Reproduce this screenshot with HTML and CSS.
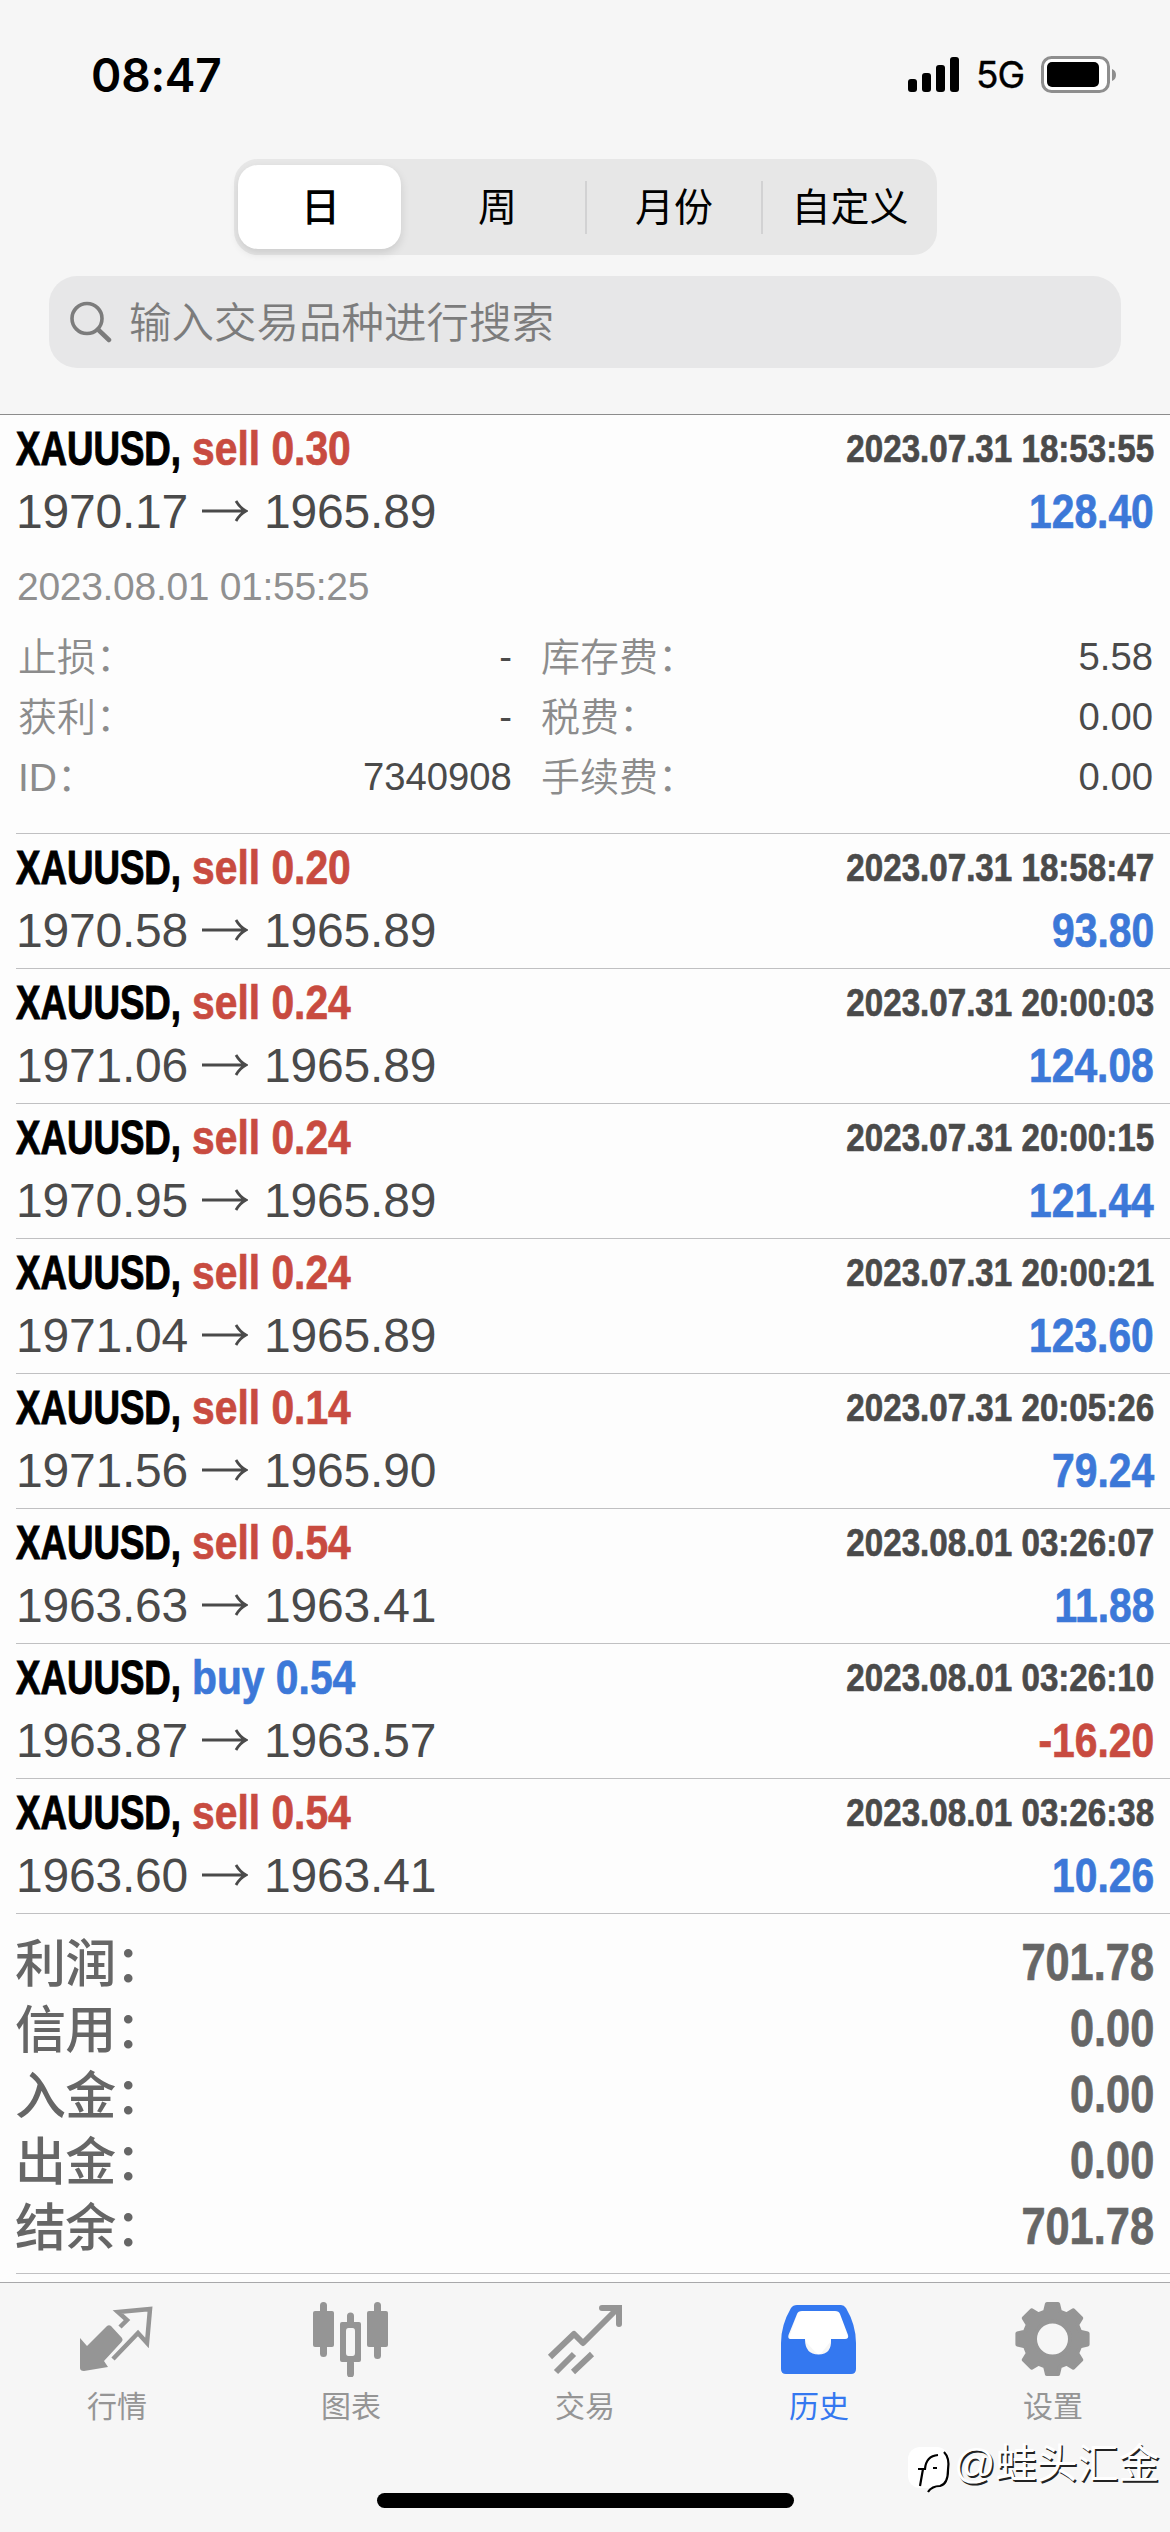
FILE: index.html
```
<!DOCTYPE html>
<html lang="zh-CN">
<head>
<meta charset="utf-8">
<title>历史</title>
<link rel="stylesheet" href="styles.css">
</head>
<body>
<div class="screen">
  <header class="header">
    <div class="status">
      <span class="time">08:47</span>
      <span class="indicators">
        <svg class="signal" width="52" height="36" viewBox="0 0 52 36"><rect x="0" y="22" width="9" height="13" rx="3"/><rect x="14" y="16" width="9" height="19" rx="3"/><rect x="28" y="8" width="9" height="27" rx="3"/><rect x="42" y="0" width="9" height="35" rx="3"/></svg>
        <span class="network">5G</span>
        <svg class="battery" width="76" height="38" viewBox="0 0 76 38"><rect x="1.5" y="1.5" width="66" height="34" rx="9" fill="#fff" stroke="#8e8e8e" stroke-width="3"/><rect x="6" y="6" width="52" height="25" rx="5"/><path d="M71 13q4 1.500 4 6t-4 6z" fill="#8e8e8e"/></svg>
      </span>
    </div>
    <nav class="segments"><span class="segment active">日</span><span class="segment">周</span><span class="segment divided">月份</span><span class="segment divided">自定义</span></nav>
    <div class="search">
      <svg width="42" height="42" viewBox="0 0 42 42" fill="none" stroke="#7c7c7c" stroke-linecap="round"><circle cx="17" cy="17.500" r="15" stroke-width="3.600"/><path d="M28 28.500l11 10.500" stroke-width="4.500"/></svg>
      <span>输入交易品种进行搜索</span>
    </div>
  </header>
  <main class="deals" id="deals"></main>
  <section class="summary">
    <div class="total"><span>利润：</span><b class="cond">701.78</b></div>
    <div class="total"><span>信用：</span><b class="cond">0.00</b></div>
    <div class="total"><span>入金：</span><b class="cond">0.00</b></div>
    <div class="total"><span>出金：</span><b class="cond">0.00</b></div>
    <div class="total"><span>结余：</span><b class="cond">701.78</b></div>
  </section>
  <footer class="tabbar">
    <a class="tab"><svg width="76" height="76" viewBox="0 0 76 76"><path d="M1 37l7 8 20-20q2-1.500 4 0l11 12q1.500 2-.5 4L25 60l4 6-24 4q-4 0-4-3z"/><path d="M41 26l7-7-9-8 32-3-3 34-9-10-25 26" fill="none" stroke="currentColor" stroke-width="4.500"/></svg><span>行情</span></a>
    <a class="tab"><svg width="76" height="76" viewBox="0 0 76 76"><g stroke="currentColor" stroke-width="7" stroke-linecap="round"><path d="M10.500 4.500v48M64.500 4.500v50M37.500 15v7M37.500 62v11"/></g><rect y="10" width="21" height="36" rx="2"/><rect x="54" y="10" width="21" height="36" rx="2"/><path fill-rule="evenodd" d="M29 21h17q2 0 2 2v36q0 2-2 2H29q-2 0-2-2V23q0-2 2-2zm6.500 6q-2.500 0-2.500 3v22q0 3 2.500 3h4q2.500 0 2.500-3V30q0-3-2.500-3z"/></svg><span>图表</span></a>
    <a class="tab"><svg width="76" height="76" viewBox="0 0 76 76" fill="none" stroke="currentColor" stroke-width="6"><path d="M3 56l24-23 9 9L70 8" stroke-linejoin="round"/><path d="M55 7h17v16" stroke-linecap="round"/><path d="M9 71l18-18M26 71l19-18"/></svg><span>交易</span></a>
    <a class="tab current"><svg width="76" height="76" viewBox="0 0 76 76"><path fill="#fff" d="M18 8h40l10 32H50L38 55 24 40H7z"/><path fill-rule="evenodd" d="M16 4h44q3 0 5 3 10 17 10 35v26q0 5-5 5H5q-5 0-5-5V42Q0 24 10 7q2-3 6-3zm5 6q-4 0-5 3L7.500 34q-1 4 2 4H24q0 15.500 13.500 15.500T50 38h14q4 0 3-4l-8-21q-1-3-5-3z"/></svg><span>历史</span></a>
    <a class="tab"><svg width="76" height="76" viewBox="0 0 76 76" id="gear"></svg><span>设置</span></a>
    <div class="watermark"><svg width="44" height="52" viewBox="0 0 44 52"><rect width="41" height="41" rx="12" fill="#fff"/><path d="M12 39l3-17M10 22h7q1-13 13-14M25 21h4" fill="none" stroke="#000" stroke-width="2.200"/><path d="M36 5q6 6 4 18 0 14-8 16-8 0-12 6" fill="none" stroke="#000" stroke-width="2.200"/></svg><span>@蛙头汇金</span></div>
    <div class="home"></div>
  </footer>
</div>
<script src="app.js"></script>
</body>
</html>
```
FILE: styles.css
```
* { box-sizing: border-box; }
body { margin: 0; background: #fdfdfd; font-family: "Liberation Sans", "Noto Sans CJK SC", sans-serif; }
.screen { width: 1170px; height: 2532px; display: flex; flex-direction: column; overflow: hidden; }
.header { height: 415px; flex: none; background: #f6f6f6; border-bottom: 1px solid #8c8c8c; display: flex; flex-direction: column; align-items: center; }
.status { width: 100%; height: 159px; display: flex; justify-content: space-between; align-items: flex-start; padding: 46px 53px 0 91px; font-family: Inter, sans-serif; }
.time { font-size: 46px; line-height: 58px; font-weight: 600; letter-spacing: -0.2px; }
.indicators { display: flex; align-items: center; height: 58px; }
.signal { margin-right: 16px; }
.network { font-size: 37px; width: 48px; margin-right: 17px; line-height: 60px; letter-spacing: -1px; -webkit-text-stroke: .4px; }
.segments { width: 703px; height: 96px; background: #e7e7e7; border-radius: 24px; display: grid; grid-template-columns: 174px 177px 176px 176px; }
.segment { position: relative; display: flex; align-items: center; justify-content: center; font-size: 39px; font-weight: 400; padding: 0 0 6px 3px; }
.segment.active { background: #fff; border-radius: 20px; margin: 6px 7px 6px 4px; font-weight: 500; box-shadow: 0 4px 10px rgba(0,0,0,.12); }
.divided::before { content: ""; position: absolute; left: 0; top: 22px; width: 2px; height: 53px; background: #d2d2d3; }
.search { width: 1072px; height: 92px; margin-top: 21px; border-radius: 28px; background: #e7e7e8; display: flex; align-items: center; padding-left: 21px; gap: 17px; font-size: 42.500px; color: #7c7c7c; font-weight: 350; }
.search span { padding-bottom: 5px; }
.deal { height: 135px; margin-left: 16px; padding: 0 16px 0 0; border-bottom: 1px solid #c0c0c2; }
.deal.open { height: 419px; }
.line { display: flex; justify-content: space-between; align-items: center; height: 64px; }
.line.top { padding-top: 3px; }
.line.price { height: 60px; margin-top: 2px; }
.cond { display: inline-block; font-weight: 700; white-space: nowrap; transform: scaleX(.85); transform-origin: right center; -webkit-text-stroke: .7px; }
.name { display: grid; grid-template-columns: 176px auto; font-size: 48px; font-weight: 700; }
.symbol { display: inline-block; width: 160px; transform: scaleX(.764); transform-origin: left center; color: #000; -webkit-text-stroke: 1px; }
.name .side { transform-origin: left center; }
.sell, .loss { color: #c84b40; }
.buy, .gain { color: #3c78d8; }
.stamp { font-size: 39px; color: #4a4a4a; }
.money { font-size: 48px; }
.quote { display: flex; align-items: center; font-size: 48px; letter-spacing: -.2px; color: #4a4a4a; }
.quote svg { margin: 0 16px 0 14px; }
.closed { font-size: 39px; letter-spacing: -.3px; color: #909090; line-height: 50px; margin: 21px 0 14px 1px; }
.details { display: grid; grid-template-columns: 496px 612px; column-gap: 29px; font-size: 39px; }
.detail { height: 60px; display: flex; align-items: center; justify-content: space-between; padding-left: 2px; color: #8c8c8c; font-weight: 350; }
.detail.right { padding-left: 0; }
.detail span { padding-bottom: 4px; }
.detail b { color: #4a4a4a; font-weight: 400; padding-top: 1px; transform: scaleX(.98); transform-origin: right; }
.summary { height: 360px; margin-left: 16px; padding: 15px 16px 0 0; border-bottom: 1px solid #c0c0c2; color: #666; font-size: 51px; }
.total { height: 66px; display: flex; justify-content: space-between; align-items: center; font-weight: 500; }
.total span { padding-bottom: 5px; letter-spacing: -.8px; margin-left: -1px; }
.tabbar { position: relative; height: 250px; margin-top: 8px; flex: none; background: #f6f6f6; border-top: 1px solid #a8a8aa; display: grid; grid-template-columns: repeat(5, 1fr); }
.tab { display: flex; flex-direction: column; align-items: center; padding-top: 18px; color: #959595; font-size: 30px; font-weight: 400; }
.tab svg { fill: currentColor; }
.tab svg[fill="none"] { fill: none; }
.tab span { line-height: 44px; margin-top: 8px; }
.current { color: #3478f0; }
.home { position: absolute; left: 377px; top: 210px; width: 417px; height: 15px; border-radius: 8px; background: #000; }
.watermark { position: absolute; left: 908px; top: 164px; display: flex; align-items: flex-start; gap: 2px; color: #fff; font-size: 41px; line-height: 42px; font-weight: 400; white-space: nowrap; text-shadow: 1.500px 1.500px 0 #222; }
.watermark span { margin-top: -4px; }
```
FILE: app.js
```
const deals = [
  ["sell 0.30", "1970.17", "1965.89", "2023.07.31 18:53:55", "128.40"],
  ["sell 0.20", "1970.58", "1965.89", "2023.07.31 18:58:47", "93.80"],
  ["sell 0.24", "1971.06", "1965.89", "2023.07.31 20:00:03", "124.08"],
  ["sell 0.24", "1970.95", "1965.89", "2023.07.31 20:00:15", "121.44"],
  ["sell 0.24", "1971.04", "1965.89", "2023.07.31 20:00:21", "123.60"],
  ["sell 0.14", "1971.56", "1965.90", "2023.07.31 20:05:26", "79.24"],
  ["sell 0.54", "1963.63", "1963.41", "2023.08.01 03:26:07", "11.88"],
  ["buy 0.54", "1963.87", "1963.57", "2023.08.01 03:26:10", "-16.20"],
  ["sell 0.54", "1963.60", "1963.41", "2023.08.01 03:26:38", "10.26"]
];
const details = [["止损：", "-"], ["库存费：", "5.58"], ["获利：", "-"], ["税费：", "0.00"], ["ID：", "7340908"], ["手续费：", "0.00"]];
const arrow = '<svg width="46" height="24" viewBox="0 0 46 24" fill="none" stroke="#4a4a4a" stroke-width="2.800"><path d="M0 12h44M34 2q4 7 10 10-6 3-10 10"/></svg>';
const detailHtml = '<div class="closed">2023.08.01 01:55:25</div><div class="details">' +
  details.map(([k, v], i) => `<div class="detail${i % 2 ? " right" : ""}"><span>${k}</span><b>${v}</b></div>`).join("") + "</div>";
document.getElementById("deals").innerHTML = deals.map(([side, from, to, stamp, money], i) => `
  <article class="deal${i ? "" : " open"}">
    <div class="line top"><span class="name"><span class="symbol">XAUUSD,</span><span class="cond side ${side.split(" ")[0]}">${side}</span></span><span class="cond stamp">${stamp}</span></div>
    <div class="line price"><span class="quote"><span>${from}</span>${arrow}<span>${to}</span></span><span class="cond money ${money[0] === "-" ? "loss" : "gain"}">${money}</span></div>
    ${i ? "" : detailHtml}
  </article>`).join("");

// Eight-toothed gear built around its centre hole.
const pts = [];
for (let i = 0; i < 8; i++) {
  [[-15, 28.5], [-9, 35.5], [9, 35.5], [15, 28.5]].forEach(([a, r]) => {
    const t = (i * 45 - 90 + a) * Math.PI / 180;
    pts.push((37.5 + r * Math.cos(t)).toFixed(1) + " " + (38 + r * Math.sin(t)).toFixed(1));
  });
}
document.getElementById("gear").innerHTML = `<path fill-rule="evenodd" stroke="currentColor" stroke-width="4" stroke-linejoin="round" d="M${pts.join("L")}zM55 38a17.500 17.500 0 1 0-35 0 17.500 17.500 0 0 0 35 0z"/>`;
```
